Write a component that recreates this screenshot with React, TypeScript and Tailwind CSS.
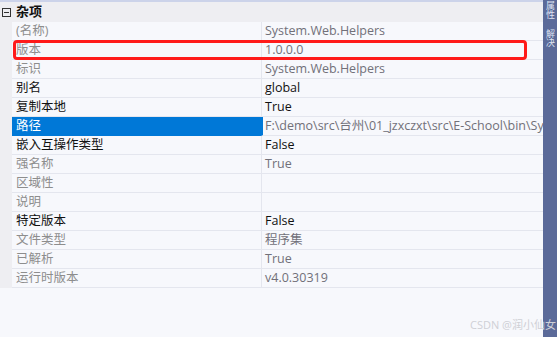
type Row = {
  name: string;
  value: string;
  dim?: boolean;
  selected?: boolean;
};

const rows: Row[] = [
  { name: '(名称)', value: 'System.Web.Helpers', dim: true },
  { name: '版本', value: '1.0.0.0', dim: true },
  { name: '标识', value: 'System.Web.Helpers', dim: true },
  { name: '别名', value: 'global' },
  { name: '复制本地', value: 'True' },
  { name: '路径', value: 'F:\\demo\\src\\台州\\01_jzxczxt\\src\\E-School\\bin\\System.Web.Helpers.dll', dim: true, selected: true },
  { name: '嵌入互操作类型', value: 'False' },
  { name: '强名称', value: 'True', dim: true },
  { name: '区域性', value: '', dim: true },
  { name: '说明', value: '', dim: true },
  { name: '特定版本', value: 'False' },
  { name: '文件类型', value: '程序集', dim: true },
  { name: '已解析', value: 'True', dim: true },
  { name: '运行时版本', value: 'v4.0.30319', dim: true },
];

function PropertyRow({ row }: { row: Row }) {
  return (
    <div className="flex h-[19px]">
      <div className="w-[12px] bg-[#eeeef2]" />
      <div
        className={
          row.selected
            ? 'w-[249px] pl-[4px] bg-[#0078d7] text-white leading-[18px] border-b border-[#0078d7]'
            : `w-[249px] pl-[4px] leading-[18px] border-b border-[#e4e6ee] ${row.dim ? 'text-[#8d8d8d]' : 'text-[#111111]'}`
        }
      >
        {row.name}
      </div>
      <div
        className={`flex-1 min-w-0 overflow-hidden whitespace-nowrap leading-[18px] border-b border-[#e4e6ee] ${
          row.selected ? 'border-l-2 border-l-[#0078d7] pl-[2px]' : 'border-l border-l-[#e4e6ee] pl-[3px]'
        } ${row.dim ? 'text-[#717079]' : 'text-[#111111]'}`}
      >
        {row.value}
      </div>
    </div>
  );
}

export default function App() {
  return (
    <div
      className="relative flex w-[557px] h-[337px] overflow-hidden bg-[#f7f8fc] text-[12.5px]"
      style={{ fontFamily: '"Open Sans", "Noto Sans CJK SC", sans-serif' }}
    >
      <div className="flex flex-col w-[543px]">
        <div className="h-[2px] bg-[#ccd3ea]" />
        <div className="flex items-center h-[20px] bg-[#eeeef2]">
          <div className="ml-[2px] w-[9px] h-[9px] border border-[#333] flex items-center justify-center">
            <div className="w-[5px] h-[1px] bg-[#333]" />
          </div>
          <span className="ml-[5px] font-bold text-[13px] text-[#111]">杂项</span>
        </div>
        {rows.map((row) => (
          <PropertyRow key={row.name} row={row} />
        ))}
      </div>

      <div className="w-[14px] bg-[#5b6a99] flex flex-col items-center text-[9px] leading-[10px] text-[#dfe3f2]">
        <span className="mt-[1px] [writing-mode:vertical-rl]">属性</span>
        <span className="mt-[10px] [writing-mode:vertical-rl]">解决</span>
      </div>

      <div className="absolute left-[13px] top-[40px] w-[514px] h-[20px] border-[3px] border-[#ff1a1a] rounded-[4px]" />

      <div className="absolute left-[470px] top-[318px] text-[11px] leading-[14px] text-[#cfd0d6] whitespace-nowrap">
        CSDN @润小仙女
      </div>
    </div>
  );
}
